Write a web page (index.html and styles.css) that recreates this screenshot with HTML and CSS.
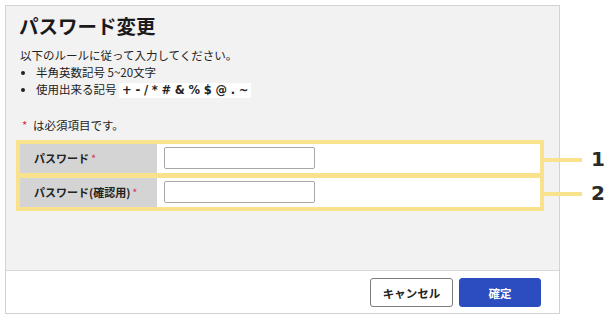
FILE: index.html
```html
<!DOCTYPE html>
<html lang="ja">
<head>
<meta charset="utf-8">
<title>パスワード変更</title>
<link rel="stylesheet" href="styles.css">
</head>
<body>
<div class="panel">
  <div class="main">
    <h1 class="title">パスワード変更</h1>
    <p class="intro">以下のルールに従って入力してください。</p>
    <ul class="rules">
      <li>半角英数記号 5~20文字</li>
      <li>使用出来る記号 <span class="code">+ - / * # &amp; % $ @ . ~</span></li>
    </ul>
    <p class="note"><span class="req">*</span> は必須項目です。</p>
    <div class="form">
      <div class="row">
        <div class="label">パスワード<span class="req2">*</span></div>
        <div class="field"><input type="password" class="input"></div>
        <div class="callout"><span class="line"></span><span class="num">1</span></div>
      </div>
      <div class="row">
        <div class="label">パスワード(確認用)<span class="req2">*</span></div>
        <div class="field"><input type="password" class="input"></div>
        <div class="callout"><span class="line"></span><span class="num">2</span></div>
      </div>
    </div>
  </div>
  <div class="footer">
    <button class="btn cancel">キャンセル</button>
    <button class="btn ok">確定</button>
  </div>
</div>
</body>
</html>
```
FILE: styles.css
```css
* { box-sizing: border-box; }
body {
  margin: 0;
  background: #fff;
  font-family: "Noto Sans CJK JP", "Noto Sans", sans-serif;
  color: #222;
}
.panel {
  margin: 5px 0 0 5px;
  width: 555px;
  height: 309px;
  border: 1px solid #d2d2d2;
  display: flex;
  flex-direction: column;
}
.main {
  background: #f2f2f2;
  flex: 1;
  padding: 8px 0 0 13px;
}
.title {
  margin: 0;
  font-size: 19.5px;
  line-height: 24px;
  font-weight: bold;
  color: #1a1a1a;
}
.intro {
  margin: 9px 0 0 1px;
  font-size: 11.5px;
  line-height: 17px;
}
.rules {
  margin: 0;
  padding: 0 0 0 17px;
  font-size: 11.5px;
  line-height: 17px;
  list-style: none;
}
.rules li { position: relative; }
.rules li::before {
  content: "";
  position: absolute;
  left: -15px;
  top: 7px;
  width: 4px;
  height: 4px;
  border-radius: 50%;
  background: #222;
}
.code {
  display: inline-block;
  background: #fff;
  font-family: "DejaVu Sans", sans-serif;
  font-weight: bold;
  font-size: 11.5px;
  line-height: 15px;
  padding: 0 3px 0 3px;
  letter-spacing: -0.15px;
  margin-left: 0;
}
.note {
  margin: 19px 0 0 3px;
  font-size: 11.5px;
  line-height: 17px;
}
.req { color: #d9303a; margin-right: 3px; }
.form {
  margin-top: 6px;
  margin-left: -3px;
  width: 528px;
  background: #f9e28c;
  padding: 4px;
  display: flex;
  flex-direction: column;
  gap: 5px;
}
.row {
  position: relative;
  height: 29px;
  display: flex;
  background: #fff;
}
.label {
  width: 137px;
  background: #d4d4d4;
  font-size: 11px;
  font-weight: bold;
  line-height: 29px;
  padding-left: 14px;
  color: #222;
}
.req2 { color: #d8336b; margin-left: 2px; font-weight: normal; }
.field {
  padding: 3px 0 0 7px;
}
.input {
  display: block;
  width: 151px;
  height: 22px;
  border: 1px solid #a8a8a8;
  border-radius: 2px;
  background: #fff;
  margin: 0;
}
.callout {
  position: absolute;
  left: 524px;
  top: 0;
  height: 29px;
  display: flex;
  align-items: center;
}
.line {
  width: 38px;
  height: 4px;
  background: #f9e28c;
  margin-top: 2px;
}
.num {
  margin-left: 9px;
  font-family: "DejaVu Sans", sans-serif;
  font-weight: bold;
  font-size: 20px;
  line-height: 20px;
  color: #2a2a2a;
  margin-top: 1px;
}
.footer {
  background: #fff;
  border-top: 1px solid #d8d8d8;
  height: 43px;
  display: flex;
  justify-content: flex-end;
  align-items: flex-start;
  gap: 6px;
  padding: 7px 18px 0 0;
}
.btn {
  height: 29px;
  border-radius: 3px;
  font-family: "Noto Sans CJK JP", sans-serif;
  font-size: 11.5px;
  font-weight: bold;
  padding: 0;
}
.cancel {
  width: 83px;
  background: #fff;
  border: 1px solid #7c7c7c;
  color: #222;
}
.ok {
  width: 82px;
  background: #2c4dbf;
  border: 1px solid #2c4dbf;
  color: #fff;
}
```
